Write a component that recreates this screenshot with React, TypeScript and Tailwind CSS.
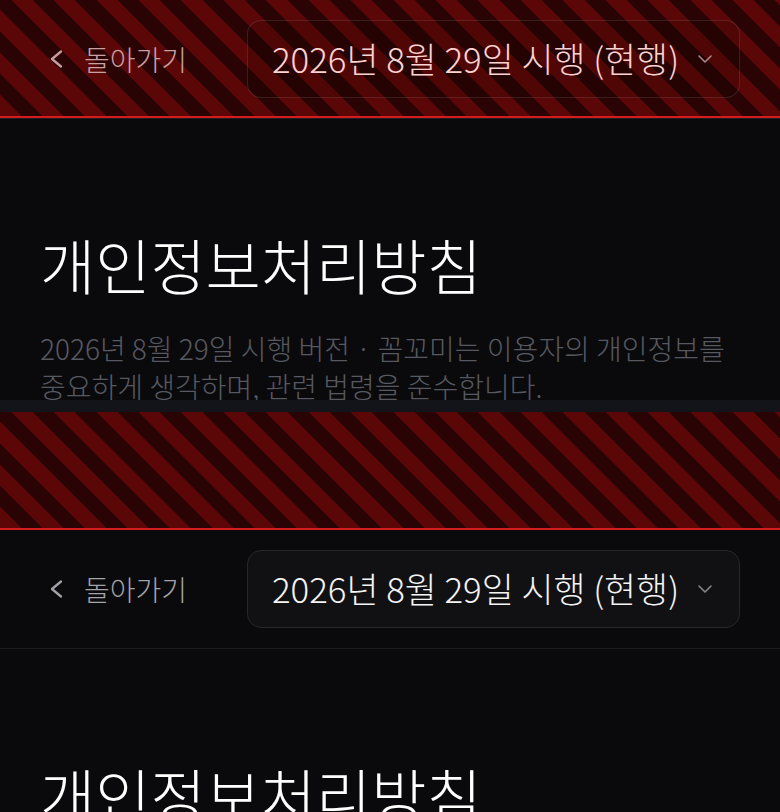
import React from "react";

const FONT = { fontFamily: '"Noto Sans CJK KR", sans-serif' };

const stripes =
  "bg-[repeating-linear-gradient(45deg,#5b0707_0px,#5b0707_15px,#2a0404_15px,#2a0404_30px)]";

function BackIcon({ color }: { color: string }) {
  return (
    <svg width="20" height="22" viewBox="0 0 20 22" fill="none">
      <path
        d="M15 3.5 L6 11 L15 18.5"
        stroke={color}
        strokeWidth="2.3"
        strokeLinecap="round"
        strokeLinejoin="round"
      />
    </svg>
  );
}

function DownIcon({ color }: { color: string }) {
  return (
    <svg width="16" height="10" viewBox="0 0 16 10" fill="none">
      <path
        d="M2 2 L8 8 L14 2"
        stroke={color}
        strokeWidth="1.6"
        strokeLinecap="round"
        strokeLinejoin="round"
      />
    </svg>
  );
}

function Header({ striped = false }: { striped?: boolean }) {
  return (
    <header className="relative h-[119px] border-b border-[#1c1c20] bg-[#0a0a0c]">
      {striped && (
        <div className={`absolute inset-x-0 top-0 h-[118px] border-b-2 border-[#d41c1c] ${stripes}`} />
      )}
      <div className="relative flex h-full items-center px-10 pb-px">
        <button className="flex items-center gap-[18px] pl-[6px] text-[28px] leading-none font-light">
          <BackIcon color={striped ? "#c89c9e" : "#a1a1a8"} />
          <span className={striped ? "text-[#caa0a3]" : "text-[#a3a3aa]"}>돌아가기</span>
        </button>
        <div
          className={`ml-auto flex h-[78px] w-[493px] items-center justify-between rounded-[14px] border pl-6 pr-[26px] ${
            striped ? "border-white/10 bg-black/10" : "border-[#27272b] bg-[#111114]"
          }`}
        >
          <span className={`text-[34.8px] leading-none font-light ${striped ? "text-[#fbd3d3]" : "text-[#f4f4f5]"}`}>
            2026년 8월 29일 시행 (현행)
          </span>
          <DownIcon color={striped ? "#a98688" : "#85858c"} />
        </div>
      </div>
    </header>
  );
}

function Intro() {
  return (
    <div className="px-10 pt-[115px]">
      <h1 className="text-[60px] leading-none font-light text-white">개인정보처리방침</h1>
      <p className="mt-[35px] text-[28px] leading-[38px] font-light text-[#575961]">
        2026년 8월 29일 시행 버전 · 꼼꼬미는 이용자의 개인정보를 중요하게 생각하며, 관련 법령을 준수합니다.
      </p>
    </div>
  );
}

export default function App() {
  return (
    <div className="h-[812px] overflow-hidden bg-[#0a0a0c]" style={FONT}>
      <Header striped />
      <section className="h-[281px] overflow-hidden">
        <Intro />
      </section>
      <div className="h-3 bg-[#12141a]" />
      <div className={`h-[118px] border-b-2 border-[#d41c1c] ${stripes}`} />
      <Header />
      <Intro />
    </div>
  );
}
